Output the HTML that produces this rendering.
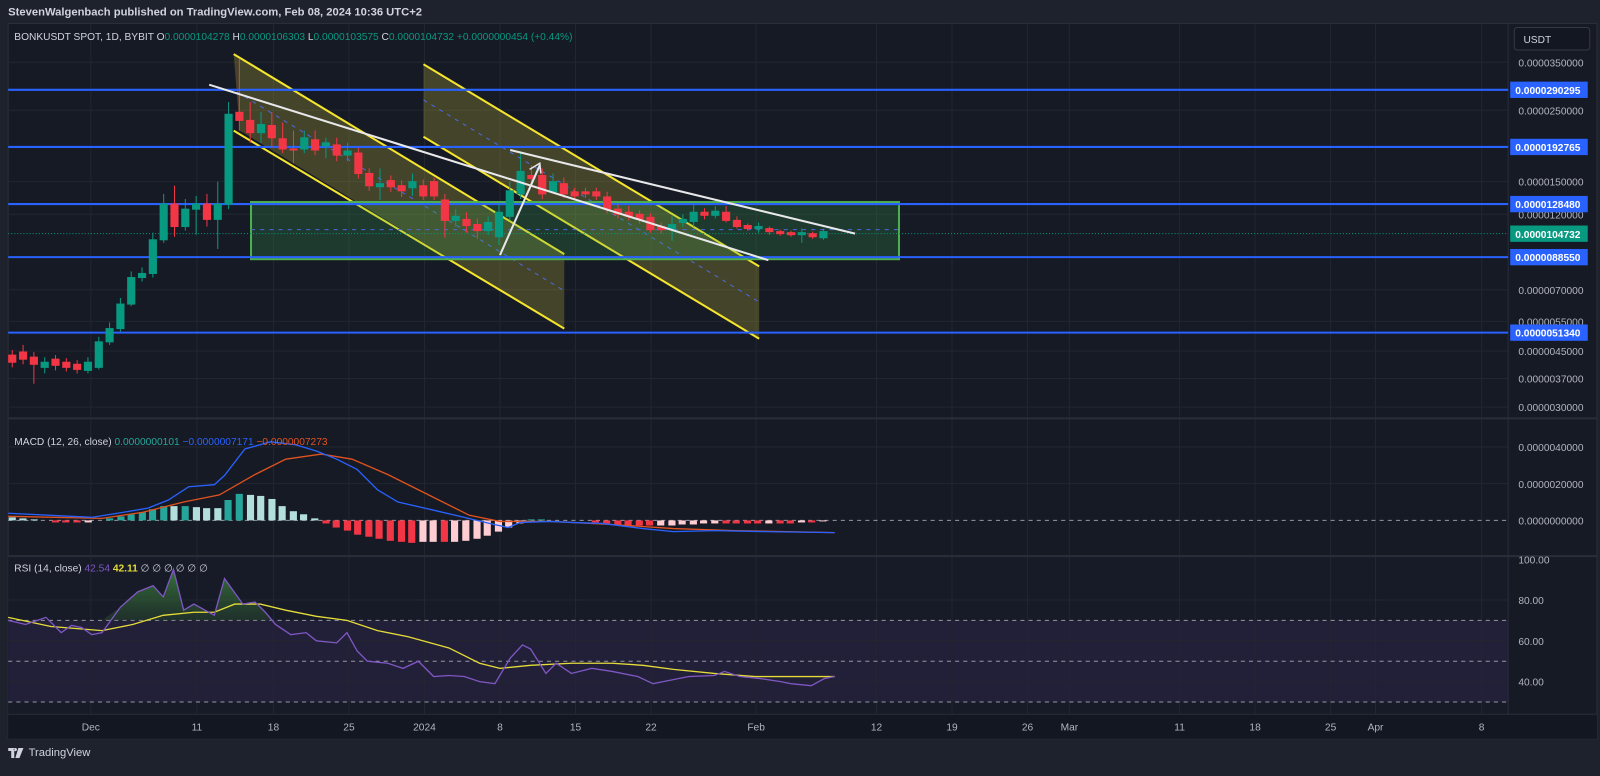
<!DOCTYPE html>
<html><head><meta charset="utf-8"><style>
html,body{margin:0;padding:0;background:#1e222d;width:1600px;height:770px;overflow:hidden}
#w{position:absolute;left:0;top:0;width:1568px;height:755px;transform:scale(1.0204);transform-origin:0 0;font-family:"Liberation Sans",sans-serif}
svg text{font-family:"Liberation Sans",sans-serif}
</style></head><body><div id="w">
<svg width="1568" height="755" viewBox="0 0 1568 755" xmlns="http://www.w3.org/2000/svg">
<rect x="0" y="0" width="1568" height="755" fill="#1e222d"/>
<text x="8" y="15" fill="#d1d4dc" font-size="11" font-weight="bold">StevenWalgenbach published on TradingView.com, Feb 08, 2024 10:36 UTC+2</text>
<rect x="8" y="23" width="1557" height="701" fill="#161a25" stroke="#2a2e39"/>
<rect x="8" y="545" width="1470" height="155" fill="#171a27"/>
<rect x="8" y="608" width="1470" height="80" fill="#221f38"/>
<!-- grid -->
<g stroke="#22262f" stroke-width="1">
<line x1="8" x2="1478" y1="61" y2="61"/><line x1="8" x2="1478" y1="108" y2="108"/><line x1="8" x2="1478" y1="178" y2="178"/><line x1="8" x2="1478" y1="210" y2="210"/><line x1="8" x2="1478" y1="284" y2="284"/><line x1="8" x2="1478" y1="315" y2="315"/><line x1="8" x2="1478" y1="344" y2="344"/><line x1="8" x2="1478" y1="371" y2="371"/><line x1="8" x2="1478" y1="399" y2="399"/>
<line x1="8" x2="1478" y1="438" y2="438"/><line x1="8" x2="1478" y1="474" y2="474"/><line x1="8" x2="1478" y1="588" y2="588"/><line x1="8" x2="1478" y1="628" y2="628"/><line x1="8" x2="1478" y1="668" y2="668"/>
<line x1="89" x2="89" y1="23" y2="700"/><line x1="193" x2="193" y1="23" y2="700"/><line x1="268" x2="268" y1="23" y2="700"/><line x1="342" x2="342" y1="23" y2="700"/><line x1="416" x2="416" y1="23" y2="700"/><line x1="490" x2="490" y1="23" y2="700"/><line x1="564" x2="564" y1="23" y2="700"/><line x1="638" x2="638" y1="23" y2="700"/><line x1="741" x2="741" y1="23" y2="700"/><line x1="859" x2="859" y1="23" y2="700"/><line x1="933" x2="933" y1="23" y2="700"/><line x1="1007" x2="1007" y1="23" y2="700"/><line x1="1048" x2="1048" y1="23" y2="700"/><line x1="1156" x2="1156" y1="23" y2="700"/><line x1="1230" x2="1230" y1="23" y2="700"/><line x1="1304" x2="1304" y1="23" y2="700"/><line x1="1348" x2="1348" y1="23" y2="700"/><line x1="1452" x2="1452" y1="23" y2="700"/>
</g>
<line x1="8" x2="1565" y1="410" y2="410" stroke="#2a2e39" stroke-width="2"/>
<line x1="8" x2="1565" y1="545" y2="545" stroke="#2a2e39" stroke-width="2"/>
<line x1="1478" x2="1478" y1="23" y2="700" stroke="#2a2e39"/>
<rect x="8" y="700" width="1557" height="24" fill="#131722"/>
<line x1="8" x2="1565" y1="700" y2="700" stroke="#2a2e39"/>
<g stroke="#9598a1" stroke-dasharray="4,4" stroke-width="1">
<line x1="8" x2="1478" y1="510" y2="510"/>
<line x1="8" x2="1478" y1="608" y2="608"/><line x1="8" x2="1478" y1="648" y2="648"/><line x1="8" x2="1478" y1="688" y2="688"/>
</g>
<!-- channels -->
<polygon points="229,53 553,249 553,322 235,128" fill="rgba(190,180,60,0.28)"/>
<line x1="229" y1="53" x2="553" y2="249" stroke="#f5e52d" stroke-width="2"/>
<line x1="229" y1="128" x2="553" y2="322" stroke="#f5e52d" stroke-width="2"/>
<line x1="232" y1="90" x2="553" y2="285" stroke="#4a6ae0" stroke-dasharray="4,5"/>
<polygon points="415,63 744,261 744,332 415,134" fill="rgba(190,180,60,0.28)"/>
<line x1="415" y1="63" x2="744" y2="261" stroke="#f5e52d" stroke-width="2"/>
<line x1="415" y1="134" x2="744" y2="332" stroke="#f5e52d" stroke-width="2"/>
<line x1="415" y1="98" x2="744" y2="296" stroke="#4a6ae0" stroke-dasharray="4,5"/>
<rect x="246" y="198" width="635" height="56" fill="rgba(60,170,80,0.22)" stroke="#4caf50" stroke-width="2"/>
<line x1="246" x2="881" y1="225" y2="225" stroke="#4a6ae0" stroke-dasharray="4,5"/>
<line x1="8" x2="1478" y1="229" y2="229" stroke="#089981" stroke-dasharray="1,2"/>
<!-- horizontal levels -->
<g stroke="#2962ff" stroke-width="2">
<line x1="8" x2="1478" y1="88" y2="88"/><line x1="8" x2="1478" y1="144" y2="144"/><line x1="8" x2="1478" y1="200" y2="200"/><line x1="8" x2="1478" y1="252" y2="252"/><line x1="8" x2="1478" y1="326" y2="326"/>
</g>
<!-- candles -->
<g stroke-width="1">
<g stroke="#f23645" fill="#f23645">
<line x1="12" x2="12" y1="343" y2="360"/><rect x="8.5" y="348" width="7" height="7"/>
<line x1="22.6" x2="22.6" y1="338" y2="357"/><rect x="19.1" y="345" width="7" height="7"/>
<line x1="33.2" x2="33.2" y1="345" y2="376"/><rect x="29.7" y="350" width="7" height="7"/>
<line x1="54.4" x2="54.4" y1="348" y2="363"/><rect x="50.9" y="352" width="7" height="6"/>
<line x1="65" x2="65" y1="351" y2="364"/><rect x="61.5" y="355" width="7" height="5"/>
<line x1="75.6" x2="75.6" y1="353" y2="366"/><rect x="72.1" y="357" width="7" height="5"/>
<line x1="171" x2="171" y1="182" y2="232"/><rect x="167.5" y="200" width="7" height="22"/>
<line x1="202.8" x2="202.8" y1="190" y2="222"/><rect x="199.3" y="200" width="7" height="15"/>
<line x1="234.6" x2="234.6" y1="58" y2="128"/><rect x="231.1" y="110" width="7" height="8"/>
<line x1="245.2" x2="245.2" y1="100" y2="140"/><rect x="241.7" y="118" width="7" height="12"/>
<line x1="266.4" x2="266.4" y1="110" y2="145"/><rect x="262.9" y="123" width="7" height="12"/>
<line x1="277" x2="277" y1="120" y2="150"/><rect x="273.5" y="136" width="7" height="10"/>
<line x1="287.6" x2="287.6" y1="128" y2="160"/><rect x="284.1" y="146" width="7" height="1"/>
<line x1="308.8" x2="308.8" y1="128" y2="152"/><rect x="305.3" y="137" width="7" height="10"/>
<line x1="330" x2="330" y1="135" y2="158"/><rect x="326.5" y="142" width="7" height="10"/>
<line x1="351.2" x2="351.2" y1="145" y2="175"/><rect x="347.7" y="150" width="7" height="20"/>
<line x1="361.8" x2="361.8" y1="165" y2="187"/><rect x="358.3" y="170" width="7" height="12"/>
<line x1="383" x2="383" y1="172" y2="188"/><rect x="379.5" y="177" width="7" height="6"/>
<line x1="393.6" x2="393.6" y1="177" y2="193"/><rect x="390.1" y="182" width="7" height="5"/>
<line x1="414.8" x2="414.8" y1="176" y2="196"/><rect x="411.3" y="182" width="7" height="10"/>
<line x1="425.4" x2="425.4" y1="174" y2="196"/><rect x="421.9" y="178" width="7" height="14"/>
<line x1="436" x2="436" y1="190" y2="233"/><rect x="432.5" y="196" width="7" height="20"/>
<line x1="457.2" x2="457.2" y1="208" y2="228"/><rect x="453.7" y="215" width="7" height="6"/>
<line x1="467.8" x2="467.8" y1="214" y2="234"/><rect x="464.3" y="220" width="7" height="6"/>
<line x1="520.8" x2="520.8" y1="162" y2="182"/><rect x="517.3" y="172" width="7" height="3"/>
<line x1="531.4" x2="531.4" y1="165" y2="195"/><rect x="527.9" y="172" width="7" height="18"/>
<line x1="552.6" x2="552.6" y1="174" y2="194"/><rect x="549.1" y="180" width="7" height="10"/>
<line x1="563.2" x2="563.2" y1="184" y2="196"/><rect x="559.7" y="188" width="7" height="4"/>
<line x1="573.8" x2="573.8" y1="184" y2="194"/><rect x="570.3" y="188" width="7" height="2"/>
<line x1="584.4" x2="584.4" y1="184" y2="196"/><rect x="580.9" y="188" width="7" height="4"/>
<line x1="595" x2="595" y1="188" y2="209"/><rect x="591.5" y="193" width="7" height="12"/>
<line x1="605.6" x2="605.6" y1="200" y2="214"/><rect x="602.1" y="205" width="7" height="5"/>
<line x1="616.2" x2="616.2" y1="202" y2="216"/><rect x="612.7" y="208" width="7" height="4"/>
<line x1="626.8" x2="626.8" y1="206" y2="219"/><rect x="623.3" y="210" width="7" height="5"/>
<line x1="637.4" x2="637.4" y1="209" y2="228"/><rect x="633.9" y="213" width="7" height="12"/>
<line x1="648" x2="648" y1="218" y2="229"/><rect x="644.5" y="222" width="7" height="3"/>
<line x1="690.4" x2="690.4" y1="204" y2="215"/><rect x="686.9" y="208" width="7" height="3"/>
<line x1="711.6" x2="711.6" y1="202" y2="218"/><rect x="708.1" y="208" width="7" height="8"/>
<line x1="722.2" x2="722.2" y1="212" y2="224"/><rect x="718.7" y="216" width="7" height="6"/>
<line x1="732.8" x2="732.8" y1="219" y2="226"/><rect x="729.3" y="221" width="7" height="3"/>
<line x1="754" x2="754" y1="222" y2="230"/><rect x="750.5" y="224" width="7" height="3"/>
<line x1="764.6" x2="764.6" y1="225" y2="231"/><rect x="761.1" y="227" width="7" height="2"/>
<line x1="775.2" x2="775.2" y1="226" y2="232"/><rect x="771.7" y="228" width="7" height="2"/>
<line x1="796.4" x2="796.4" y1="227" y2="234"/><rect x="792.9" y="229" width="7" height="3"/>
</g>
<g stroke="#089981" fill="#089981">
<line x1="43.8" x2="43.8" y1="350" y2="366"/><rect x="40.3" y="355" width="7" height="5"/>
<line x1="86.2" x2="86.2" y1="350" y2="366"/><rect x="82.7" y="355" width="7" height="8"/>
<line x1="96.8" x2="96.8" y1="330" y2="362"/><rect x="93.3" y="335" width="7" height="25"/>
<line x1="107.4" x2="107.4" y1="316" y2="338"/><rect x="103.9" y="322" width="7" height="13"/>
<line x1="118" x2="118" y1="292" y2="325"/><rect x="114.5" y="298" width="7" height="24"/>
<line x1="128.6" x2="128.6" y1="266" y2="300"/><rect x="125.1" y="272" width="7" height="26"/>
<line x1="139.2" x2="139.2" y1="262" y2="276"/><rect x="135.7" y="268" width="7" height="4"/>
<line x1="149.8" x2="149.8" y1="228" y2="272"/><rect x="146.3" y="235" width="7" height="33"/>
<line x1="160.4" x2="160.4" y1="190" y2="238"/><rect x="156.9" y="200" width="7" height="35"/>
<line x1="181.6" x2="181.6" y1="195" y2="226"/><rect x="178.1" y="205" width="7" height="17"/>
<line x1="192.2" x2="192.2" y1="192" y2="230"/><rect x="188.7" y="200" width="7" height="5"/>
<line x1="213.4" x2="213.4" y1="178" y2="244"/><rect x="209.9" y="200" width="7" height="15"/>
<line x1="224" x2="224" y1="100" y2="205"/><rect x="220.5" y="112" width="7" height="88"/>
<line x1="255.8" x2="255.8" y1="110" y2="140"/><rect x="252.3" y="122" width="7" height="8"/>
<line x1="298.2" x2="298.2" y1="128" y2="150"/><rect x="294.7" y="135" width="7" height="11"/>
<line x1="319.4" x2="319.4" y1="135" y2="155"/><rect x="315.9" y="140" width="7" height="3"/>
<line x1="340.6" x2="340.6" y1="140" y2="158"/><rect x="337.1" y="148" width="7" height="4"/>
<line x1="372.4" x2="372.4" y1="165" y2="196"/><rect x="368.9" y="180" width="7" height="3"/>
<line x1="404.2" x2="404.2" y1="170" y2="192"/><rect x="400.7" y="178" width="7" height="6"/>
<line x1="446.6" x2="446.6" y1="205" y2="222"/><rect x="443.1" y="212" width="7" height="4"/>
<line x1="478.4" x2="478.4" y1="212" y2="230"/><rect x="474.9" y="218" width="7" height="8"/>
<line x1="489" x2="489" y1="200" y2="240"/><rect x="485.5" y="208" width="7" height="24"/>
<line x1="499.6" x2="499.6" y1="178" y2="216"/><rect x="496.1" y="187" width="7" height="25"/>
<line x1="510.2" x2="510.2" y1="150" y2="195"/><rect x="506.7" y="168" width="7" height="22"/>
<line x1="542" x2="542" y1="170" y2="190"/><rect x="538.5" y="178" width="7" height="10"/>
<line x1="658.6" x2="658.6" y1="212" y2="236"/><rect x="655.1" y="220" width="7" height="5"/>
<line x1="669.2" x2="669.2" y1="210" y2="222"/><rect x="665.7" y="215" width="7" height="3"/>
<line x1="679.8" x2="679.8" y1="200" y2="222"/><rect x="676.3" y="208" width="7" height="9"/>
<line x1="701" x2="701" y1="202" y2="214"/><rect x="697.5" y="207" width="7" height="4"/>
<line x1="743.4" x2="743.4" y1="218" y2="228"/><rect x="739.9" y="222" width="7" height="2"/>
<line x1="785.8" x2="785.8" y1="224" y2="238"/><rect x="782.3" y="228" width="7" height="2"/>
<line x1="807" x2="807" y1="224" y2="235"/><rect x="803.5" y="227" width="7" height="6"/>
</g>
</g>
<!-- white trendlines -->
<g stroke="#e8e8ea" stroke-width="2" fill="none">
<line x1="205" y1="83" x2="753" y2="255"/>
<line x1="500" y1="147" x2="838" y2="229"/>
<polyline points="490,250 529,162"/>
<polyline points="519,166 529,160 530,170" stroke-width="1.5"/>
</g>
<!-- MACD histogram -->
<g>
<rect x="8.5" y="507" width="7" height="3" fill="#b2dfdb"/><rect x="19" y="508" width="7" height="2" fill="#b2dfdb"/><rect x="30" y="509" width="7" height="1" fill="#b2dfdb"/>
<rect x="51" y="510" width="7" height="2" fill="#f23645"/><rect x="61" y="510" width="7" height="2" fill="#f23645"/><rect x="72" y="510" width="7" height="2" fill="#f23645"/><rect x="83" y="510" width="7" height="2" fill="#ffcdd2"/>
<rect x="104" y="508" width="7" height="2" fill="#26a69a"/><rect x="115" y="506" width="7" height="4" fill="#26a69a"/><rect x="125" y="504" width="7" height="6" fill="#26a69a"/><rect x="136" y="502" width="7" height="8" fill="#26a69a"/><rect x="146" y="499" width="7" height="11" fill="#26a69a"/><rect x="157" y="496" width="7" height="14" fill="#26a69a"/><rect x="167" y="496" width="7" height="14" fill="#b2dfdb"/><rect x="178" y="496" width="7" height="14" fill="#26a69a"/><rect x="189" y="497" width="7" height="13" fill="#b2dfdb"/><rect x="199" y="498" width="7" height="12" fill="#b2dfdb"/><rect x="210" y="498" width="7" height="12" fill="#b2dfdb"/><rect x="220" y="490" width="7" height="20" fill="#26a69a"/><rect x="231" y="484" width="7" height="26" fill="#26a69a"/><rect x="242" y="485" width="7" height="25" fill="#b2dfdb"/><rect x="252" y="486" width="7" height="24" fill="#b2dfdb"/><rect x="263" y="489" width="7" height="21" fill="#b2dfdb"/><rect x="273" y="496" width="7" height="14" fill="#b2dfdb"/><rect x="284" y="501" width="7" height="9" fill="#b2dfdb"/><rect x="294" y="504" width="7" height="6" fill="#b2dfdb"/><rect x="305" y="508" width="7" height="2" fill="#b2dfdb"/>
<rect x="316" y="510" width="7" height="3" fill="#f23645"/><rect x="326" y="510" width="7" height="7" fill="#f23645"/><rect x="337" y="510" width="7" height="10" fill="#f23645"/><rect x="347" y="510" width="7" height="14" fill="#f23645"/><rect x="358" y="510" width="7" height="16" fill="#f23645"/><rect x="368" y="510" width="7" height="18" fill="#f23645"/><rect x="379" y="510" width="7" height="20" fill="#f23645"/><rect x="390" y="510" width="7" height="21" fill="#f23645"/><rect x="400" y="510" width="7" height="22" fill="#f23645"/><rect x="411" y="510" width="7" height="21" fill="#ffcdd2"/><rect x="421" y="510" width="7" height="21" fill="#ffcdd2"/><rect x="432" y="510" width="7" height="21" fill="#f23645"/><rect x="442" y="510" width="7" height="21" fill="#ffcdd2"/><rect x="453" y="510" width="7" height="20" fill="#ffcdd2"/><rect x="464" y="510" width="7" height="18" fill="#ffcdd2"/><rect x="474" y="510" width="7" height="15" fill="#ffcdd2"/><rect x="485" y="510" width="7" height="11" fill="#ffcdd2"/><rect x="495" y="510" width="7" height="7" fill="#ffcdd2"/><rect x="506" y="510" width="7" height="3" fill="#ffcdd2"/>
<rect x="517" y="509" width="7" height="1" fill="#26a69a"/><rect x="527" y="509" width="7" height="1" fill="#26a69a"/>
<rect x="580" y="510" width="7" height="2" fill="#f23645"/><rect x="591" y="510" width="7" height="3" fill="#f23645"/><rect x="602" y="510" width="7" height="4" fill="#f23645"/><rect x="612" y="510" width="7" height="5" fill="#f23645"/><rect x="623" y="510" width="7" height="5" fill="#f23645"/><rect x="633" y="510" width="7" height="5" fill="#f23645"/><rect x="644" y="510" width="7" height="5" fill="#ffcdd2"/><rect x="655" y="510" width="7" height="5" fill="#ffcdd2"/><rect x="665" y="510" width="7" height="4" fill="#ffcdd2"/><rect x="676" y="510" width="7" height="4" fill="#ffcdd2"/><rect x="686" y="510" width="7" height="3" fill="#ffcdd2"/><rect x="697" y="510" width="7" height="3" fill="#ffcdd2"/><rect x="708" y="510" width="7" height="3" fill="#f23645"/><rect x="718" y="510" width="7" height="3" fill="#f23645"/><rect x="729" y="510" width="7" height="3" fill="#f23645"/><rect x="739" y="510" width="7" height="3" fill="#f23645"/><rect x="750" y="510" width="7" height="3" fill="#ffcdd2"/><rect x="761" y="510" width="7" height="3" fill="#f23645"/><rect x="771" y="510" width="7" height="3" fill="#f23645"/><rect x="782" y="510" width="7" height="2" fill="#ffcdd2"/><rect x="792" y="510" width="7" height="2" fill="#f23645"/><rect x="803" y="510" width="7" height="1" fill="#ffcdd2"/>
</g>
<polyline fill="none" stroke="#e0521f" stroke-width="1.3" points="8,506 100,508 140,502 180,492 215,485 250,465 280,450 315,445 345,450 380,465 420,485 460,505 490,511 540,511 600,514 660,518 720,520 818,522"/>
<polyline fill="none" stroke="#2962ff" stroke-width="1.3" points="8,503 90,507 115,503 145,498 165,490 185,477 210,475 220,466 240,440 265,433 290,436 310,442 330,450 350,460 370,480 390,492 425,500 455,507 480,513 498,517 510,512 540,511 560,512 590,513 630,518 660,521 700,520 750,521 818,522"/>
<!-- RSI -->
<defs><clipPath id="ob"><rect x="8" y="545" width="1470" height="63"/></clipPath>
<linearGradient id="g" x1="0" y1="0" x2="0" y2="1"><stop offset="0" stop-color="#3e8c3e" stop-opacity="0.8"/><stop offset="1" stop-color="#2a4a30" stop-opacity="0.4"/></linearGradient></defs>
<polygon clip-path="url(#ob)" fill="url(#g)" points="100,608 118,595 135,580 150,574 160,585 170,558 180,598 190,592 210,603 220,567 238,592 250,590 260,600 270,612 270,608"/>
<polyline fill="none" stroke="#e5dc3a" stroke-width="1.3" points="8,605 50,614 100,618 130,612 160,603 190,600 210,600 230,592 255,592 280,598 310,604 340,608 370,618 400,624 440,635 470,650 490,655 520,652 560,650 600,650 630,652 660,656 700,660 740,663 780,663 818,663"/>
<polyline fill="none" stroke="#7e57c2" stroke-width="1.3" points="8,608 25,612 45,605 60,620 70,613 80,615 90,622 100,620 118,595 135,580 150,574 160,585 170,558 180,598 190,592 210,603 220,567 238,592 250,590 260,600 270,612 285,622 300,620 310,628 330,630 340,620 350,638 360,648 380,650 395,655 410,648 425,663 440,662 455,663 470,668 485,670 500,645 512,632 520,636 535,660 545,650 560,660 580,655 600,658 625,663 640,670 650,668 675,663 700,662 710,658 725,663 745,665 765,668 775,670 795,672 808,665 818,663"/>
<!-- legends -->
<g font-size="10">
<text x="14" y="39" fill="#d1d4dc">BONKUSDT SPOT, 1D, BYBIT  <tspan fill="#d1d4dc">O</tspan><tspan fill="#089981">0.0000104278</tspan>  <tspan fill="#d1d4dc">H</tspan><tspan fill="#089981">0.0000106303</tspan>  <tspan fill="#d1d4dc">L</tspan><tspan fill="#089981">0.0000103575</tspan>  <tspan fill="#d1d4dc">C</tspan><tspan fill="#089981">0.0000104732</tspan>  <tspan fill="#089981">+0.0000000454 (+0.44%)</tspan></text>
<text x="14" y="436" fill="#d1d4dc">MACD (12, 26, close)  <tspan fill="#26a69a">0.0000000101</tspan>  <tspan fill="#2962ff">−0.0000007171</tspan>  <tspan fill="#e0521f">−0.0000007273</tspan></text>
<text x="14" y="560" fill="#d1d4dc">RSI (14, close)  <tspan fill="#7e57c2">42.54</tspan>  <tspan fill="#e5dc3a" font-weight="bold">42.11</tspan>  ∅  ∅  ∅  ∅  ∅  ∅</text>
</g>
<!-- price axis -->
<rect x="1484" y="27" width="74" height="22" rx="3" fill="#131722" stroke="#363a45"/>
<text x="1493" y="42" fill="#d1d4dc" font-size="10">USDT</text>
<g font-size="10" fill="#b2b5be">
<text x="1488" y="65">0.0000350000</text><text x="1488" y="112">0.0000250000</text><text x="1488" y="182">0.0000150000</text><text x="1488" y="214">0.0000120000</text><text x="1488" y="288">0.0000070000</text><text x="1488" y="319">0.0000055000</text><text x="1488" y="348">0.0000045000</text><text x="1488" y="375">0.0000037000</text><text x="1488" y="403">0.0000030000</text>
<text x="1488" y="442">0.0000040000</text><text x="1488" y="478">0.0000020000</text><text x="1488" y="514">0.0000000000</text>
<text x="1488" y="552">100.00</text><text x="1488" y="592">80.00</text><text x="1488" y="632">60.00</text><text x="1488" y="672">40.00</text>
</g>
<g font-size="10" fill="#ffffff" font-weight="bold">
<rect x="1480" y="80" width="76" height="16" fill="#2962ff"/><text x="1485" y="92">0.0000290295</text>
<rect x="1480" y="136" width="76" height="16" fill="#2962ff"/><text x="1485" y="148">0.0000192765</text>
<rect x="1480" y="192" width="76" height="16" fill="#2962ff"/><text x="1485" y="204">0.0000128480</text>
<rect x="1480" y="221" width="76" height="16" fill="#089981"/><text x="1485" y="233">0.0000104732</text>
<rect x="1480" y="244" width="76" height="16" fill="#2962ff"/><text x="1485" y="256">0.0000088550</text>
<rect x="1480" y="318" width="76" height="16" fill="#2962ff"/><text x="1485" y="330">0.0000051340</text>
</g>
<!-- time axis -->
<g font-size="10" fill="#b2b5be" text-anchor="middle">
<text x="89" y="716">Dec</text><text x="193" y="716">11</text><text x="268" y="716">18</text><text x="342" y="716">25</text><text x="416" y="716">2024</text><text x="490" y="716">8</text><text x="564" y="716">15</text><text x="638" y="716">22</text><text x="741" y="716">Feb</text><text x="859" y="716">12</text><text x="933" y="716">19</text><text x="1007" y="716">26</text><text x="1048" y="716">Mar</text><text x="1156" y="716">11</text><text x="1230" y="716">18</text><text x="1304" y="716">25</text><text x="1348" y="716">Apr</text><text x="1452" y="716">8</text>
</g>
</svg>
<div style="position:absolute;left:8px;top:732px;color:#d1d4dc;font-size:11px;display:flex;align-items:center;gap:4px">
<svg width="16" height="10" viewBox="0 0 16 10"><path d="M0 0h6v10h-3v-7h-3z M7 0a1.6 1.6 0 1 0 0.01 0z M10 0h5l-4 10h-4z" fill="#d1d4dc"/></svg>TradingView</div>
</div></body></html>
